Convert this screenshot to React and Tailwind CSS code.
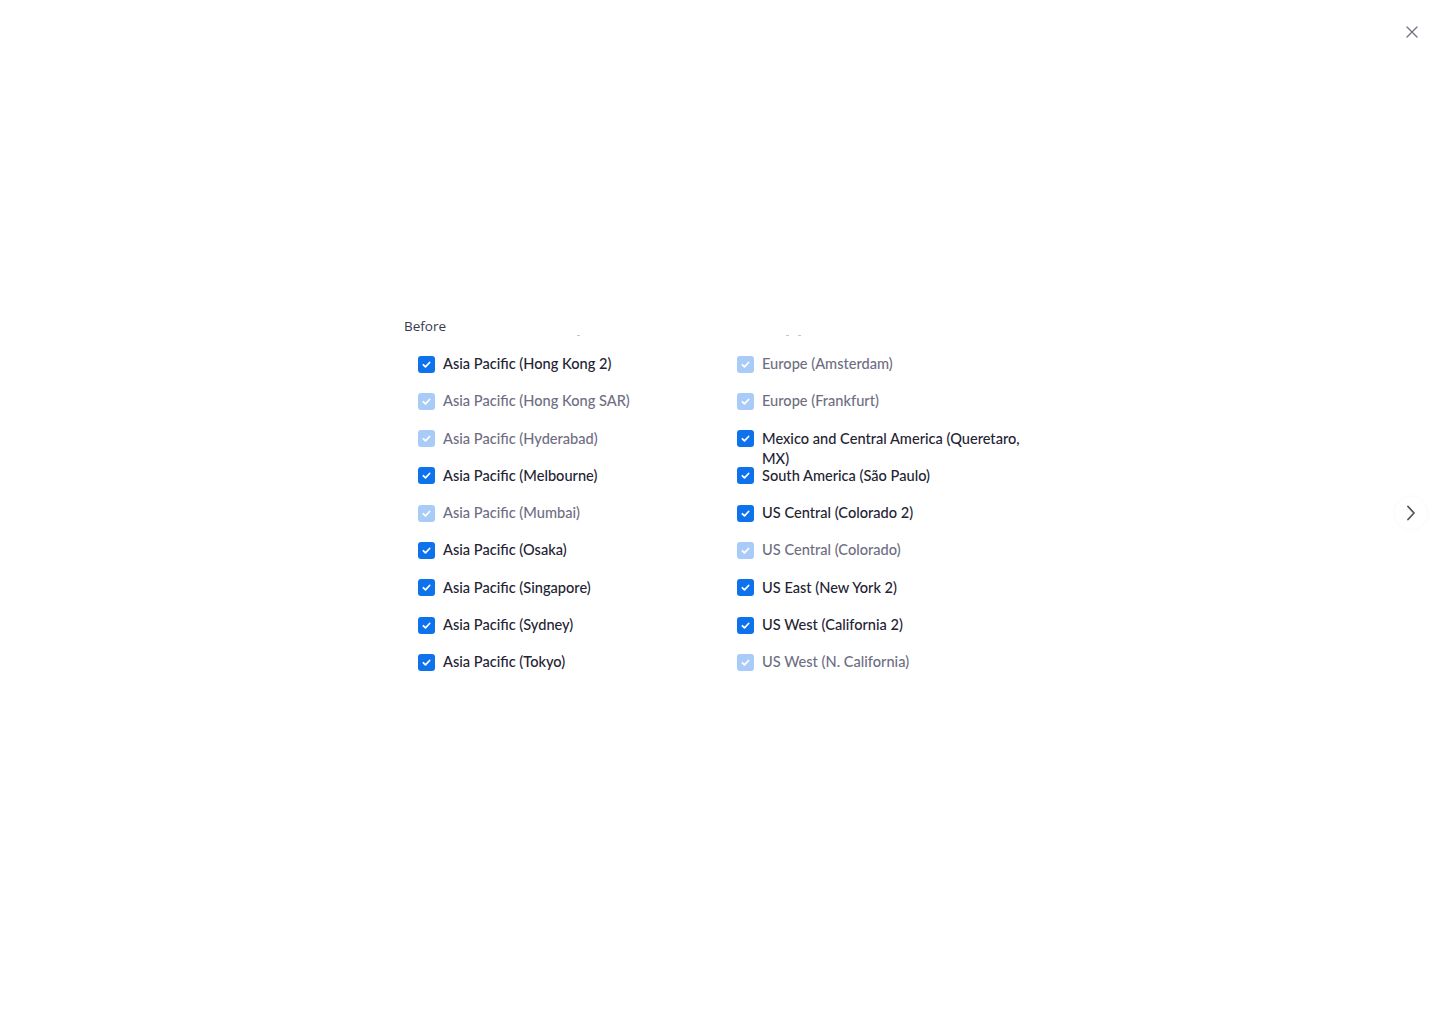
import React from "react";

const left = [
  ["Asia Pacific (Hong Kong 2)", true],
  ["Asia Pacific (Hong Kong SAR)", false],
  ["Asia Pacific (Hyderabad)", false],
  ["Asia Pacific (Melbourne)", true],
  ["Asia Pacific (Mumbai)", false],
  ["Asia Pacific (Osaka)", true],
  ["Asia Pacific (Singapore)", true],
  ["Asia Pacific (Sydney)", true],
  ["Asia Pacific (Tokyo)", true],
];
const right = [
  ["Europe (Amsterdam)", false],
  ["Europe (Frankfurt)", false],
  ["Mexico and Central America (Queretaro, MX)", true],
  ["South America (São Paulo)", true],
  ["US Central (Colorado 2)", true],
  ["US Central (Colorado)", false],
  ["US East (New York 2)", true],
  ["US West (California 2)", true],
  ["US West (N. California)", false],
];

function Box({ on }) {
  return (
    <span
      className={
        "mt-[1.5px] flex h-[17px] w-[17px] shrink-0 items-center justify-center rounded-[3px] " +
        (on ? "bg-[#0e72ed]" : "bg-[#a8cbf8]")
      }
    >
      <svg width="11" height="11" viewBox="0 0 12 12" fill="none">
        <path d="M2.6 6.3l2.3 2.2 4.5-4.7" stroke="white" strokeWidth="1.9" strokeLinecap="round" strokeLinejoin="round" />
      </svg>
    </span>
  );
}

function Item({ label, on }) {
  return (
    <div className="flex h-[37.3px] items-start gap-[8px]">
      <Box on={on} />
      <span
        className={
          "w-[272px] text-[14.6px] font-medium leading-[20px] " + (on ? "text-[#232333]" : "text-[#6e6e82]")
        }
      >
        {label}
      </span>
    </div>
  );
}

function Speck() {
  return <span className="h-[1px] w-[3px] bg-[#c8c8cc]" />;
}

export default function App() {
  return (
    <div
      className="relative h-[1024px] w-[1440px] overflow-hidden bg-white"
      style={{ fontFamily: "Lato, 'Noto Sans', sans-serif" }}
    >
      <button className="absolute right-[22px] top-[26px] flex h-[12px] w-[12px] items-center justify-center text-[#6e7680]">
        <svg width="12" height="12" viewBox="0 0 12 12" fill="none">
          <path d="M1 1l10 10M11 1L1 11" stroke="currentColor" strokeWidth="1.4" strokeLinecap="round" />
        </svg>
      </button>
      <button className="absolute left-[1395px] top-[497px] flex h-[32px] w-[32px] items-center justify-center rounded-full bg-white text-[#53535f] shadow-[0_0_4px_rgba(0,0,0,0.04)]">
        <svg width="10" height="16" viewBox="0 0 10 16" fill="none">
          <path d="M2 1.5l6 6.5-6 6.5" stroke="currentColor" strokeWidth="1.8" strokeLinecap="round" strokeLinejoin="round" />
        </svg>
      </button>

      <div className="pl-[404px] pt-[317px]">
        <div
          className="leading-[18px] text-[#39394d]"
          style={{ fontFamily: "'Open Sans', Lato, sans-serif", fontSize: "13.5px" }}
        >
          Before
        </div>
        <div className="flex h-[19px] items-start pl-[173px]">
          <Speck />
          <span className="w-[206px]" />
          <Speck />
          <span className="w-[9px]" />
          <Speck />
        </div>
        <div className="flex pl-[14px]">
          <div className="w-[319px]">
            {left.map(([l, on]) => (
              <Item key={l} label={l} on={on} />
            ))}
          </div>
          <div className="w-[300px]">
            {right.map(([l, on]) => (
              <Item key={l} label={l} on={on} />
            ))}
          </div>
        </div>
      </div>
    </div>
  );
}
